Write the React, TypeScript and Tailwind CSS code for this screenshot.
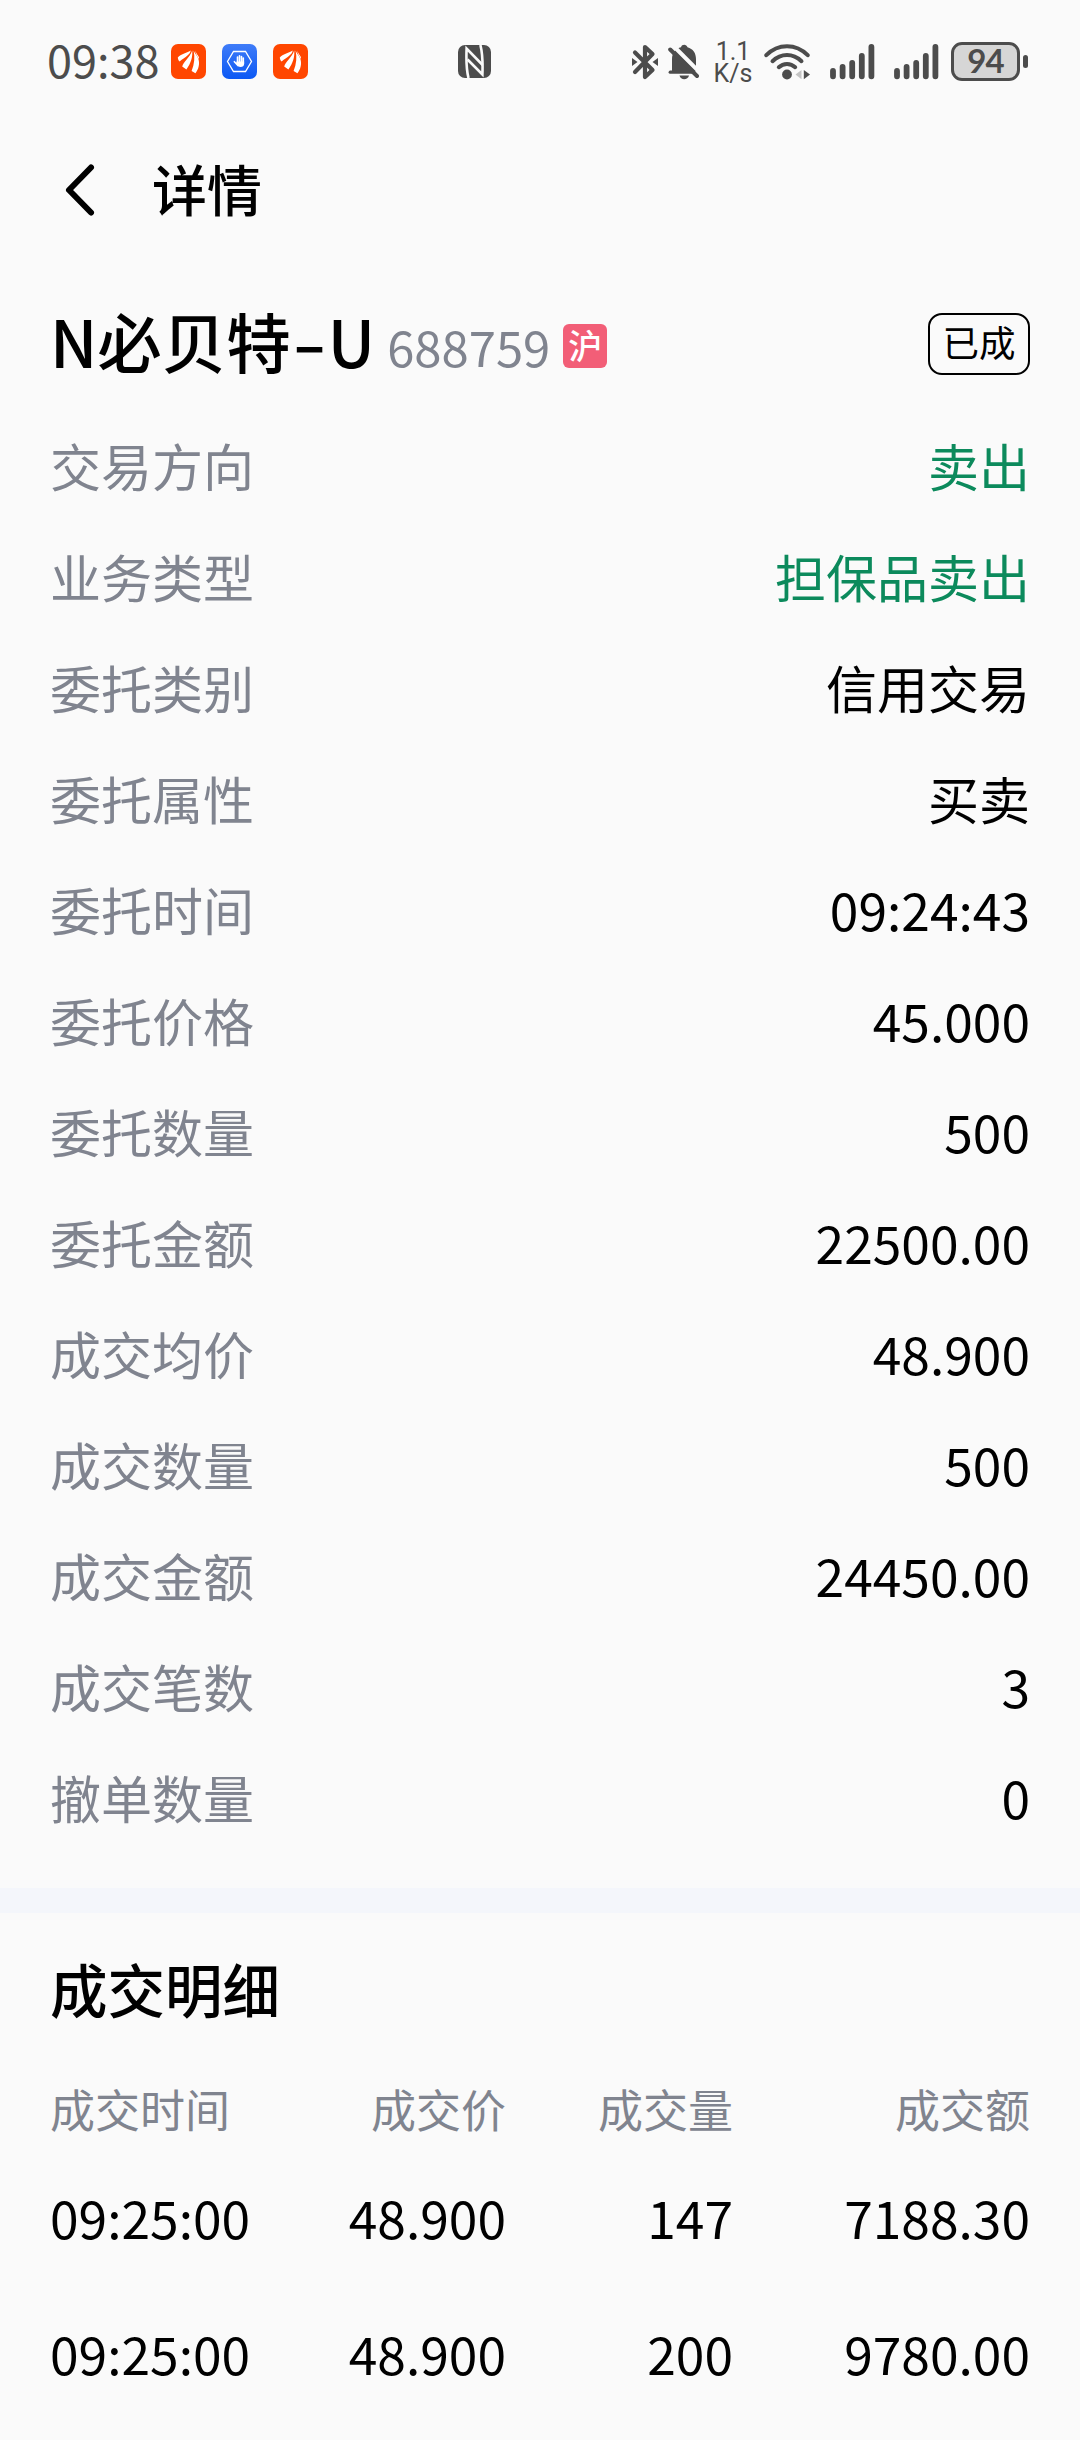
const details = [
  { label: '交易方向', value: '卖出', green: true },
  { label: '业务类型', value: '担保品卖出', green: true },
  { label: '委托类别', value: '信用交易' },
  { label: '委托属性', value: '买卖' },
  { label: '委托时间', value: '09:24:43', num: true },
  { label: '委托价格', value: '45.000', num: true },
  { label: '委托数量', value: '500', num: true },
  { label: '委托金额', value: '22500.00', num: true },
  { label: '成交均价', value: '48.900', num: true },
  { label: '成交数量', value: '500', num: true },
  { label: '成交金额', value: '24450.00', num: true },
  { label: '成交笔数', value: '3', num: true },
  { label: '撤单数量', value: '0', num: true },
];

const deals = [
  { time: '09:25:00', price: '48.900', volume: '147', amount: '7188.30' },
  { time: '09:25:00', price: '48.900', volume: '200', amount: '9780.00' },
];

function BrokerIcon() {
  return (
    <svg width="35" height="35" viewBox="0 0 35 35">
      <rect width="35" height="35" rx="7" fill="#ff4600" />
      <path d="M6.8 13.5C10 10 15 9.5 19.8 6.5C18.5 11.5 14.5 12.5 8.6 17.6C7.6 16.8 7 15.2 6.8 13.5Z" fill="#fff" />
      <path d="M21.2 6.5C21.8 13 20 19 15.4 25.4L11.2 22.6C12.5 17.5 18.5 14 21.2 6.5Z" fill="#fff" />
      <path d="M22.6 6.5C23.5 9.5 26.2 11.5 27.4 15C29 20 27.5 25.5 24.4 29.2L20.6 27C23.5 20 24 13 22.6 6.5Z" fill="#fff" />
      <path d="M24.4 6.5C24.8 9 26.8 11 27.9 13V15.2C26.8 12.5 24.2 10 24.4 6.5Z" fill="#fff" />
    </svg>
  );
}

function BlockIcon() {
  return (
    <svg width="35" height="35" viewBox="0 0 35 35">
      <defs>
        <linearGradient id="block" x1="0" y1="0" x2="0" y2="1">
          <stop offset="0" stopColor="#3f7cf8" />
          <stop offset="1" stopColor="#0b58f4" />
        </linearGradient>
      </defs>
      <rect width="35" height="35" rx="7" fill="url(#block)" />
      <path d="M11.5 7.5H23.5L29.5 17.5L23.5 27.5H11.5L5.5 17.5Z" fill="none" stroke="#fff" strokeWidth="1.3" />
      <path d="M12.4 17.7L15.5 21V13M17.5 20V11.8M19.5 20V12.5M21.3 20V14" stroke="#fff" strokeWidth="1.6" strokeLinecap="round" fill="none" />
      <path d="M14.6 17.5H22.1V20C22.1 22 20.7 23 18.5 23C16.5 23 15.3 21.8 14 19.8Z" fill="#fff" />
    </svg>
  );
}

function NfcIcon() {
  return (
    <svg width="33" height="33" viewBox="0 0 33 33">
      <rect width="33" height="33" rx="7" fill="#4c4c4c" />
      <path d="M10.5 33C8.4 25 8.2 13 8.6 3.5L24.6 20" fill="none" stroke="#fafafa" strokeWidth="2.6" />
      <path d="M22.4 0C24.4 8 24.8 20 24.4 29.5L9.5 14.5" fill="none" stroke="#fafafa" strokeWidth="2.6" />
    </svg>
  );
}

function BluetoothIcon() {
  return (
    <svg width="26" height="36" viewBox="0 0 26 36">
      <path d="M3 8.5L20.5 26L13 33V3L20.5 10L3 28" fill="none" stroke="#4c4c4c" strokeWidth="4.2" strokeLinecap="round" strokeLinejoin="round" />
      <path d="M0 14L5.5 18L0 22ZM26 14L20.5 18L26 22Z" fill="#4c4c4c" />
    </svg>
  );
}

function MutedIcon() {
  return (
    <svg width="32" height="36" viewBox="0 0 32 36">
      <path d="M4 27V15C4 8.5 8 4.5 13 3.2C13.5 1.5 14.8 0.8 16.2 0.8C17.7 0.8 19 1.7 19.5 3.2C25 4.7 28 9 28 15V27Z" fill="#4c4c4c" />
      <path d="M2.2 28.2H26" stroke="#4c4c4c" strokeWidth="3.2" strokeLinecap="round" />
      <path d="M11.5 31.5H21C20.2 34 18.5 35.3 16.2 35.3S12.3 34 11.5 31.5Z" fill="#4c4c4c" />
      <path d="M5.5 2L32 28.5" stroke="#fafafa" strokeWidth="4" />
      <path d="M2.2 5.5L29 32" stroke="#4c4c4c" strokeWidth="4" strokeLinecap="round" />
    </svg>
  );
}

function WifiIcon() {
  return (
    <svg width="46" height="36" viewBox="0 0 46 36">
      <g fill="none" stroke="#4c4c4c" strokeWidth="4" strokeLinecap="round">
        <path d="M2.3 11.2C14 -0.8 32 -0.8 43.7 11.2" />
        <path d="M8.5 17.2C17 9 29 9 37.5 17.2" />
        <path d="M14.8 23.2C19.5 18.8 26.5 18.8 31.2 23.2" />
      </g>
      <circle cx="23" cy="30.5" r="4.9" fill="#4c4c4c" />
      <path d="M37.5 26V35.2L31.5 30.5Z" fill="#c4c4c4" />
      <path d="M39.8 26V35.2L46 30.5Z" fill="#4c4c4c" />
    </svg>
  );
}

function SignalIcon() {
  return (
    <svg width="45" height="36" viewBox="0 0 45 36">
      <path d="M3 27V32.3M12.6 23V32.3M22.2 19V32.3M31.8 12V32.3M41.4 3V32.3" stroke="#4c4c4c" strokeWidth="5.8" strokeLinecap="round" />
    </svg>
  );
}

function StatusBar() {
  return (
    <div className="flex h-[123px] items-center pl-[47px] text-[#4c4c4c]">
      <span className="w-[124px] pb-1.5 text-[45px] leading-none">09:38</span>
      <div className="flex gap-4">
        <BrokerIcon />
        <BlockIcon />
        <BrokerIcon />
      </div>
      <div className="ml-[150px]"><NfcIcon /></div>
      <div className="ml-[141px]"><BluetoothIcon /></div>
      <div className="ml-[10px]"><MutedIcon /></div>
      <div className="ml-[13px] flex w-[40px] flex-col items-center gap-[3px] pt-0.5 font-[Roboto,sans-serif] text-[25px] leading-[19px]">
        <span>1.1</span>
        <span>K/s</span>
      </div>
      <div className="ml-[11px]"><WifiIcon /></div>
      <div className="ml-[20px]"><SignalIcon /></div>
      <div className="ml-[19px]"><SignalIcon /></div>
      <div className="ml-[12px] flex h-[39px] w-[69px] items-center justify-center rounded-[11px] border-3 border-[#4c4c4c] bg-[#d6d6d6] pb-0.5 font-[Lato,sans-serif] text-[33px] leading-none font-bold tracking-[-1px]">
        94
      </div>
      <div className="ml-[3px] h-[13px] w-[5px] rounded-sm bg-[#4c4c4c]" />
    </div>
  );
}

export default function App() {
  return (
    <main className='h-[2440px] w-[1080px] overflow-hidden bg-[#fafafa] font-["Noto_Sans_CJK_SC",sans-serif] text-black'>
      <StatusBar />

      <header className="flex h-[134px] items-center pl-[64px]">
        <svg width="32" height="54" viewBox="0 0 32 54">
          <path d="M27 4.5L5 27L27 49.5" fill="none" stroke="#000" strokeWidth="6" strokeLinecap="round" strokeLinejoin="round" />
        </svg>
        <h1 className="ml-[56px] pb-1.5 text-[55px] leading-none font-medium">详情</h1>
      </header>

      <section className="flex h-[155px] items-center justify-between px-[50px] pt-[18px]">
        <div className="flex items-center">
          <h2 className="flex pb-1.5 text-[64.5px] leading-none font-medium">
            N必贝特<span className="inline-block w-[37px] scale-x-150 text-center">-</span>U
          </h2>
          <span className="ml-[12px] pt-1 text-[49px] leading-none text-[#80848f]">688759</span>
          <span className="mt-1 ml-[13px] flex size-[44px] items-center justify-center rounded-md bg-[#f25e77] pb-0.5 text-[34px] leading-none font-medium text-white">沪</span>
        </div>
        <span className="flex h-[62px] w-[102px] items-center justify-center rounded-[14px] border-2 border-black pb-0.5 text-[36.5px] leading-none">已成</span>
      </section>

      <section className="pr-[50px] pb-8 pl-[50px]">
        {details.map((item) => (
          <div key={item.label} className="flex h-[111px] items-center justify-between pb-1 text-[51px] leading-none">
            <span className="text-[#80848f]">{item.label}</span>
            <span className={item.num ? 'pb-0.5 text-[51.5px]' : item.green ? 'text-[#0c8a5c]' : ''}>{item.value}</span>
          </div>
        ))}
      </section>

      <div className="mt-px h-[25px] bg-[#f4f6fb]" />

      <section className="pr-[50px] pl-[50px]">
        <h2 className="flex h-[154px] items-center pb-0.5 text-[57.5px] leading-none font-medium">成交明细</h2>
        <div className="grid h-[84px] grid-cols-[228px_228px_227px_297px] items-center pb-0.5 text-right text-[45px] leading-none text-[#80848f]">
          <span className="text-left">成交时间</span>
          <span>成交价</span>
          <span>成交量</span>
          <span>成交额</span>
        </div>
        {deals.map((deal) => (
          <div key={deal.amount} className="grid h-[136px] grid-cols-[228px_228px_227px_297px] items-center pb-1 text-right text-[51.5px] leading-none">
            <span className="text-left">{deal.time}</span>
            <span>{deal.price}</span>
            <span>{deal.volume}</span>
            <span>{deal.amount}</span>
          </div>
        ))}
      </section>
    </main>
  );
}
